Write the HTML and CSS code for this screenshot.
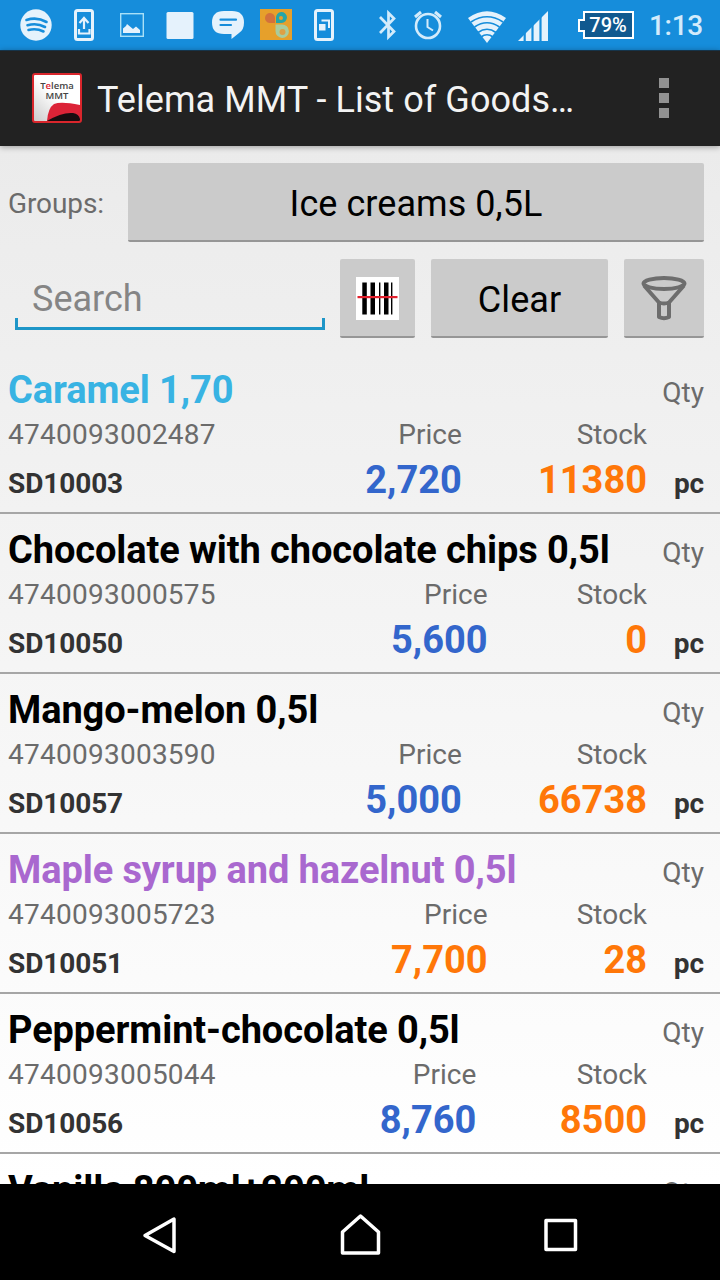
FILE: index.html
```html
<!DOCTYPE html>
<html lang="en">
<head>
    <meta charset="UTF-8">
    <meta name="viewport" content="width=device-width, initial-scale=1.0">
    <title>Telema MMT - List of Goods</title>

    <link rel="stylesheet" href="styles.css">
</head>
<body>
    <div class="status">
        <div class="notifications">
            <svg viewBox="0 0 48 50">
                <circle cx="24" cy="25" r="15.7" fill="#e5f2fc"/>
                <path d="M14.500 20 Q25 16.500 34.500 22 M15.500 25.200 Q25 22.500 33 27 M16.500 30 Q24.500 28 31.500 31.500" fill="none" stroke="#168ddb" stroke-width="2.600" stroke-linecap="round"/>
            </svg>
            <svg viewBox="0 0 48 50">
                <rect x="15.500" y="10.500" width="17" height="29" rx="2" fill="none" stroke="#e5f2fc" stroke-width="3"/>
                <path d="M24 29 V18 M19.500 23 L24 18 L28.500 23 M19 29 V33.500 H29.500 V29" fill="none" stroke="#e5f2fc" stroke-width="2.200"/>
            </svg>
            <svg viewBox="0 0 48 50">
                <rect x="12.700" y="13.700" width="22.600" height="22.600" fill="none" stroke="#a9e0f7" stroke-width="1.400"/>
                <path d="M15 33 V28.500 L18 26 L19 24 L22 26.500 L25 29 L28 26.500 L32 30 V33 Z" fill="#e5f2fc"/>
            </svg>
            <svg viewBox="0 0 48 50">
                <rect x="10.500" y="12" width="27" height="27" rx="1.500" fill="#e5f2fc"/>
            </svg>
            <svg viewBox="0 0 48 50">
                <path d="M20 11 H28 Q40 11 40 22.500 Q40 30 35 33 L27.500 39 V34 H20 Q8 34 8 22.500 Q8 11 20 11 Z" fill="#e5f2fc"/>
                <path d="M16.500 19.700 H32 M16.500 25 H27" stroke="#168ddb" stroke-width="2.200" stroke-linecap="round"/>
            </svg>
            <svg viewBox="0 0 48 50">
                <rect x="8" y="9" width="32" height="31" fill="#e6a02b"/>
                <path d="M23 23 H17.500 A5 5 0 1 1 23 18 Z" fill="#d3713c"/>
                <path d="M24 23 V18 A5.500 5.500 0 1 1 29.500 23 Z" fill="#26a5a8"/>
                <circle cx="29" cy="18" r="2" fill="#e6a02b"/>
                <path d="M23.500 24.500 H30 A6.700 6.700 0 1 1 23.500 31 Z" fill="#a9cc9c"/>
                <circle cx="30.500" cy="32" r="3" fill="#dea044"/>
            </svg>
            <svg viewBox="0 0 48 50">
                <rect x="15.500" y="10.500" width="17" height="29" rx="2" fill="none" stroke="#e5f2fc" stroke-width="3"/>
                <path d="M19 24 H25.500 V30.500 H19 Z" fill="#e5f2fc"/>
                <path d="M21.500 20.500 H29 V28" fill="none" stroke="#e5f2fc" stroke-width="2"/>
            </svg>
        </div>
        <div class="system">
            <svg class="bluetooth" viewBox="0 0 20 50">
                <path d="M2 17 L16 31.500 L10.500 37 V13 L16 18.500 L2 33" fill="none" stroke="#d3ebfb" stroke-width="2.700"/>
            </svg>
            <svg class="alarm" viewBox="0 0 30 50">
                <circle cx="15" cy="26" r="12" fill="none" stroke="#d3ebfb" stroke-width="2.600"/>
                <path d="M2 17 L8 12 M22 12 L28 17" stroke="#d3ebfb" stroke-width="3"/>
                <path d="M14.500 19 V27 L20 30.500" fill="none" stroke="#d3ebfb" stroke-width="2"/>
            </svg>
            <svg class="wifi" viewBox="0 0 40 50">
                <path d="M1 18 Q20 4.500 39 18 L20 43 Z" fill="#e5f2fc"/>
                <path d="M4 22 Q20 11.500 36 22 M7.500 27 Q20 18.500 32.500 27 M11 32.500 Q20 26 29 32.500 M14 37 Q20 32.500 26 37" fill="none" stroke="#168ddb" stroke-width="1.700"/>
            </svg>
            <svg class="signal" viewBox="0 0 30 50">
                <path d="M0 41 L30 11 V41 Z" fill="#e5f2fc"/>
                <path d="M6.700 30 V42 M14.500 20 V42 M22.500 12 V42" stroke="#168ddb" stroke-width="2.200"/>
            </svg>
            <div class="battery">
                <svg viewBox="0 0 56 28">
                    <path d="M6 1 H55 V27 H6 V20 H1 V9 H6 Z" fill="#10598f" stroke="#fff" stroke-width="2"/>
                </svg>
                <span>79%</span>
            </div>
            <span class="clock">1:13</span>
        </div>
    </div>

    <div class="actionbar">
        <div class="logo">
            <p>T<span>e</span>lema</p>
            <p>MMT</p>
            <svg viewBox="0 0 46 46">
                <path d="M13 46 Q14 33 20 29 Q27 26 46 30 V46 Z" fill="#dc2337"/>
                <path d="M13 46 Q28 37 39 38 Q45 39 46 44 V46 Z" fill="#180d10"/>
            </svg>
        </div>
        <h1>Telema MMT - List of Goods…</h1>
        <div class="menu"><i></i><i></i><i></i></div>
    </div>

    <div class="content">
        <div class="groups">
            <p>Groups:</p>
            <button class="btn">Ice creams 0,5L</button>
        </div>
        <div class="tools">
            <div class="search">
                <input type="text" placeholder="Search">
            </div>
            <button class="btn scan">
                <svg viewBox="0 0 43 43">
                    <rect width="43" height="43" fill="#fff"/>
                    <path d="M6.300 5.500 h4.500 v32 h-4.500 Z M14.500 5.500 h4.500 v32 h-4.500 Z M23 5.500 h1.400 v32 h-1.400 Z M28 5.500 h4.500 v32 h-4.500 Z M35 5.500 h1.400 v32 h-1.400 Z"/>
                    <rect x="1.500" y="19" width="40" height="2.200" fill="#e3202d"/>
                </svg>
            </button>
            <button class="btn clear">Clear</button>
            <button class="btn filter">
                <svg viewBox="0 0 46 46" fill="none" stroke="#6d6d6d" stroke-width="4" stroke-linejoin="round">
                    <ellipse cx="23" cy="7.500" rx="20.500" ry="5.500"/>
                    <path d="M3 9.500 L18 26.500 V41 Q23 43.500 28 41 V26.500 L43 9.500 M18 26.500 Q23 28.500 28 26.500"/>
                </svg>
            </button>
        </div>

        <div class="item">
            <div class="top"><h2 class="blue">Caramel 1,70</h2><p>Qty</p></div>
            <div class="info">
                <div class="code"><p>4740093002487</p><b>SD10003</b></div>
                <div class="price"><p>Price</p><b>2,720</b></div>
                <div class="stock"><p>Stock</p><b>11380</b></div>
                <b class="unit">pc</b>
            </div>
        </div>
        <div class="item">
            <div class="top"><h2>Chocolate with chocolate chips 0,5l</h2><p>Qty</p></div>
            <div class="info">
                <div class="code"><p>4740093000575</p><b>SD10050</b></div>
                <div class="price"><p>Price</p><b>5,600</b></div>
                <div class="stock"><p>Stock</p><b>0</b></div>
                <b class="unit">pc</b>
            </div>
        </div>
        <div class="item">
            <div class="top"><h2>Mango-melon 0,5l</h2><p>Qty</p></div>
            <div class="info">
                <div class="code"><p>4740093003590</p><b>SD10057</b></div>
                <div class="price"><p>Price</p><b>5,000</b></div>
                <div class="stock"><p>Stock</p><b>66738</b></div>
                <b class="unit">pc</b>
            </div>
        </div>
        <div class="item">
            <div class="top"><h2 class="purple">Maple syrup and hazelnut 0,5l</h2><p>Qty</p></div>
            <div class="info">
                <div class="code"><p>4740093005723</p><b>SD10051</b></div>
                <div class="price special"><p>Price</p><b>7,700</b></div>
                <div class="stock"><p>Stock</p><b>28</b></div>
                <b class="unit">pc</b>
            </div>
        </div>
        <div class="item">
            <div class="top"><h2>Peppermint-chocolate 0,5l</h2><p>Qty</p></div>
            <div class="info">
                <div class="code"><p>4740093005044</p><b>SD10056</b></div>
                <div class="price"><p>Price</p><b>8,760</b></div>
                <div class="stock"><p>Stock</p><b>8500</b></div>
                <b class="unit">pc</b>
            </div>
        </div>
        <div class="item">
            <div class="top"><h2>Vanilla 800ml+200ml</h2><p>Qty</p></div>
        </div>
    </div>

    <div class="navbar">
        <svg viewBox="0 0 48 48"><path d="M39 8 V40.500 L10 24.500 Z"/></svg>
        <svg viewBox="0 0 48 48"><path d="M6.500 42 V21 L24.500 5 L42.500 21 V42 Z"/></svg>
        <svg viewBox="0 0 48 48"><rect x="9" y="9.500" width="29.500" height="29"/></svg>
    </div>
</body>
</html>
```
FILE: styles.css
```css
* {
    padding: 0;
    margin: 0;
    box-sizing: border-box;
}

body {
    display: flex;
    flex-direction: column;
    height: 1280px;
    overflow: hidden;
    font-family: Roboto, sans-serif;
    font-size: 28px;
    background-color: black;
}

svg {
    display: block;
    flex: none;
}

/* status bar */
.status {
    display: flex;
    flex: none;
    justify-content: space-between;
    height: 50px;
    padding: 0 16px 0 12px;
    background-color: #168ddb;
}

.notifications,
.system {
    display: flex;
    align-items: center;
}

.notifications svg {
    width: 48px;
    height: 50px;
}

.bluetooth {
    width: 20px;
    height: 50px;
    margin-right: 15px;
}

.alarm {
    width: 30px;
    height: 50px;
    margin-right: 24px;
}

.wifi {
    width: 40px;
    height: 50px;
    margin-right: 11px;
}

.signal {
    width: 30px;
    height: 50px;
    margin-right: 30px;
}

.battery {
    position: relative;
    width: 56px;
    height: 28px;
    margin-right: 15px;
}

.battery span {
    position: absolute;
    top: 0;
    left: 6px;
    width: 48px;
    text-align: center;
    font-size: 20px;
    font-weight: 500;
    line-height: 28px;
    color: white;
}

.clock {
    width: 55px;
    font-size: 28px;
    font-weight: 500;
    line-height: 50px;
    padding-top: 2px;
    letter-spacing: -0.3px;
    white-space: nowrap;
    color: #d3ebfb;
}

/* action bar */
.actionbar {
    position: relative;
    display: flex;
    flex: none;
    align-items: center;
    height: 96px;
    padding: 0 51px 0 32px;
    background-color: #222;
    border-top: 1px solid #16344a;
    box-shadow: 0 1px 6px rgba(0, 0, 0, 0.35);
}

.logo {
    position: relative;
    width: 50px;
    height: 50px;
    margin: 0 15px 1px 0;
    overflow: hidden;
    border: 2px solid #d9262c;
    border-radius: 3px;
    background: linear-gradient(to top right, #ccc, white 50%);
}

.logo p {
    text-align: center;
    font-family: "Open Sans", sans-serif;
    font-size: 9.5px;
    font-weight: 600;
    line-height: 10px;
    color: #444;
}

.logo p:first-child {
    padding-top: 6px;
}

.logo span {
    color: #dc2337;
}

.logo svg {
    position: absolute;
    left: 0;
    bottom: 0;
    width: 46px;
    height: 46px;
}

.actionbar h1 {
    flex: 1;
    padding-top: 2px;
    font-size: 36px;
    font-weight: 400;
    letter-spacing: 0.06px;
    white-space: nowrap;
    color: #f3f3f3;
}

.menu {
    display: flex;
    flex-direction: column;
    gap: 5px;
    padding-bottom: 2px;
}

.menu i {
    width: 10px;
    height: 10px;
    background-color: #929292;
}

/* content */
.content {
    flex: 1;
    overflow: hidden;
    padding-top: 17px;
    background: linear-gradient(#ebebeb, white);
}

.groups,
.tools {
    display: flex;
    align-items: center;
    padding-right: 16px;
}

.groups p {
    width: 128px;
    padding: 2px 0 0 8px;
    letter-spacing: -0.1px;
    color: #6b6b6b;
}

.btn {
    display: flex;
    align-items: center;
    justify-content: center;
    height: 79px;
    padding-top: 4px;
    border: none;
    border-bottom: 2px solid #969696;
    border-radius: 2px;
    background-color: #cbcbcb;
    font-family: inherit;
    font-size: 36px;
    letter-spacing: 0.05px;
    color: black;
}

.groups .btn {
    flex: 1;
}

.tools {
    gap: 16px;
    margin-top: 17px;
    margin-bottom: 16px;
    padding-left: 15px;
}

.search {
    position: relative;
    flex: 1;
}

.search input {
    width: 100%;
    height: 60px;
    padding-left: 17px;
    border: none;
    outline: none;
    background: none;
    font-family: inherit;
    font-size: 36px;
}

.search input::placeholder {
    color: #858585;
}

.search::after {
    content: "";
    position: absolute;
    left: 0;
    right: -1px;
    bottom: -1px;
    height: 9px;
    border: 3px solid #1e96c8;
    border-top: none;
}

.scan,
.filter {
    padding-top: 2px;
}

.scan {
    width: 75px;
}

.scan svg {
    width: 43px;
    height: 43px;
}

.clear {
    width: 177px;
}

.filter {
    width: 80px;
}

.filter svg {
    width: 46px;
    height: 46px;
}

/* list of goods */
.item {
    height: 160px;
    padding: 12px 16px 0 8px;
    border-bottom: 2px solid #a6a6a6;
}

.item p {
    color: #6b6b6b;
}

.top {
    display: flex;
    justify-content: space-between;
    height: 52px;
}

.top h2 {
    font-size: 38px;
    line-height: 48px;
    letter-spacing: -0.1px;
    white-space: nowrap;
}

.top p {
    line-height: 53px;
}

.blue {
    color: #38b3e3;
}

.purple {
    color: #a968cf;
}

.info {
    display: flex;
}

.info > div {
    flex: 1 1 auto;
    display: flex;
    flex-direction: column;
}

.info p {
    line-height: 33px;
}

.info .code {
    margin-right: -3px;
}

.info .code p {
    letter-spacing: 0.25px;
}

.info b {
    line-height: 58px;
}

.code b,
.info .unit {
    line-height: 65px;
    letter-spacing: -0.1px;
    color: #333;
}

.price,
.stock {
    text-align: right;
}

.price b,
.stock b {
    font-size: 38px;
}

.price b {
    color: #3366cc;
}

.stock b,
.special b {
    color: #ff7708;
}

.info .unit {
    width: 57px;
    padding-top: 33px;
    text-align: right;
}

/* system navigation */
.navbar {
    display: flex;
    flex: none;
    justify-content: space-between;
    height: 96px;
    padding: 27px 135px 0;
    background-color: black;
}

.navbar svg {
    width: 48px;
    height: 48px;
    fill: none;
    stroke: white;
    stroke-width: 3.5;
    stroke-linejoin: round;
}
```
